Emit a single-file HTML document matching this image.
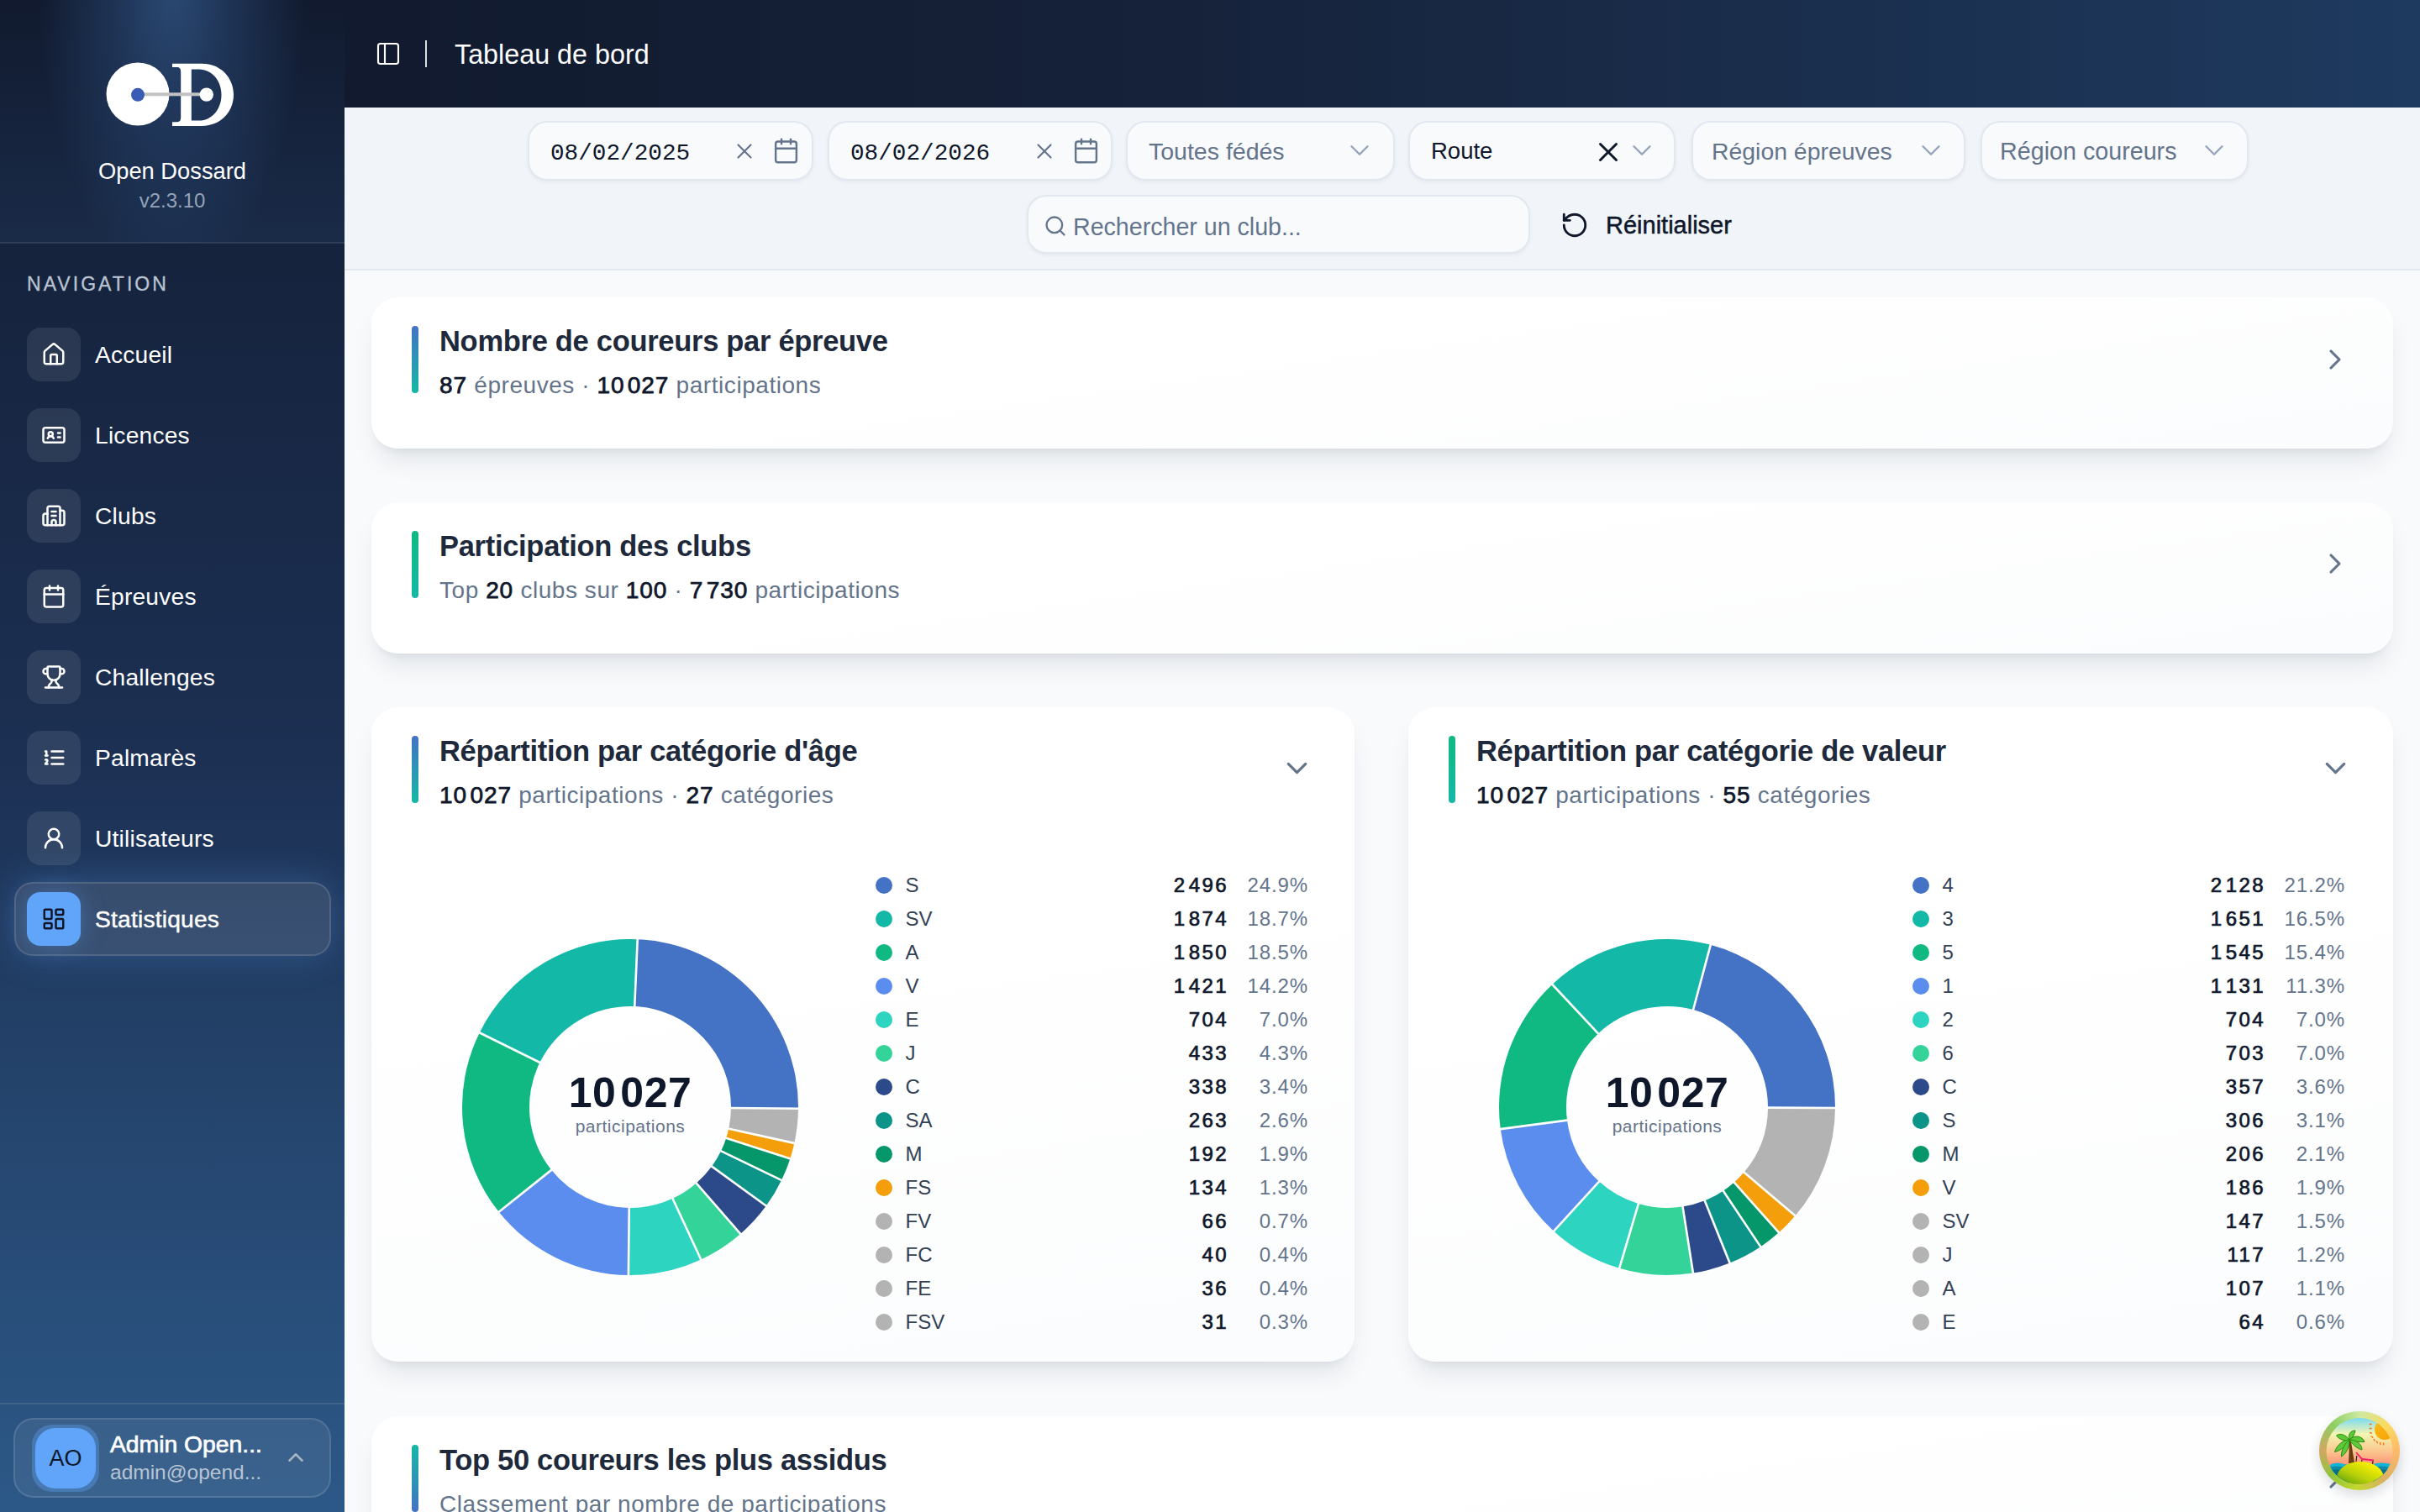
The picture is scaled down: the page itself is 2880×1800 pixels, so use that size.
<!DOCTYPE html>
<html><head><meta charset="utf-8">
<style>
*{box-sizing:border-box;margin:0;padding:0}
html,body{width:2880px;height:1800px;overflow:hidden;background:#f8fafc;font-family:"Liberation Sans",sans-serif}
.abs{position:absolute}
svg{display:block}
/* sidebar */
#sb{position:absolute;left:0;top:0;width:410px;height:1800px;
 background:linear-gradient(180deg,#121c32 0%,#16243f 20%,#1c3053 50%,#25466f 75%,#2c5887 100%);overflow:hidden}
#sbtop{position:absolute;left:0;top:0;width:410px;height:289px;
 background:radial-gradient(ellipse 160px 360px at 205px -20px,rgba(52,90,140,0.75) 0%,rgba(42,74,120,0.5) 45%,rgba(30,50,85,0) 100%),linear-gradient(180deg,#111a2e 0%,#16243e 60%,#1a2b48 100%)}
#sbdiv{position:absolute;left:0;top:288px;width:410px;height:2px;background:rgba(148,163,184,0.18)}
.brand{position:absolute;left:0;width:410px;text-align:center;color:#fff}
.navlbl{position:absolute;left:32px;top:325px;font-size:23px;letter-spacing:3.05px;color:#b9c3d2;-webkit-text-stroke:0.35px #b9c3d2}
.ni{position:absolute;left:32px;width:360px;height:64px}
.ni .ib{position:absolute;left:0;top:0;width:64px;height:64px;border-radius:16px;background:rgba(255,255,255,0.09)}
.ni .ib svg{position:absolute;left:17px;top:17px}
.ni .t{position:absolute;left:81px;top:0px;line-height:64px;font-size:28.2px;color:#fff;white-space:nowrap;letter-spacing:0.2px}
#active{position:absolute;left:17px;top:1050px;width:377px;height:88px;border-radius:22px;background:rgba(255,255,255,0.11);border:2px solid rgba(255,255,255,0.13);box-shadow:0 0 40px rgba(96,165,250,0.28)}
/* header */
#hd{position:absolute;left:410px;top:0;width:2470px;height:128px;background:linear-gradient(90deg,#111a2e 0%,#16223a 40%,#1e3a5f 100%)}
#fb{position:absolute;left:410px;top:128px;width:2470px;height:194px;background:#f1f5f9;border-bottom:2px solid #e2e8f0}
.inp{position:absolute;top:144px;height:71px;border-radius:23px;background:#f8fafc;border:2px solid #e2e8f0;box-shadow:0 2px 4px rgba(15,23,42,0.05)}
.inp .tx{position:absolute;top:0;line-height:66px;font-size:28px;color:#64748b;white-space:nowrap}
/* cards */
.card{position:absolute;background:linear-gradient(172deg,#ffffff 35%,#fbfcfd 100%);border-radius:32px;box-shadow:0 20px 30px -6px rgba(15,23,42,0.09),0 8px 12px -8px rgba(15,23,42,0.1)}
.bar{position:absolute;left:48px;width:8px;border-radius:4px}
.ttl{position:absolute;left:81px;font-size:34.5px;font-weight:700;color:#1e293b;white-space:nowrap;letter-spacing:-0.3px}
.sub{position:absolute;left:81px;font-size:28px;color:#64748b;white-space:nowrap;letter-spacing:0.55px}
.sub b{color:#0f172a;font-weight:400;letter-spacing:0.9px;-webkit-text-stroke:0.75px #0f172a}
.leg{position:absolute;height:40px;width:514px}
.leg .d{position:absolute;left:0;top:10px;width:20px;height:20px;border-radius:50%}
.leg .l{position:absolute;left:35.5px;top:0;line-height:40px;font-size:24px;color:#334155}
.leg .n{position:absolute;right:94px;top:0;line-height:40px;font-size:24px;font-weight:400;color:#0f172a;letter-spacing:2.4px;-webkit-text-stroke:0.7px #0f172a}
.leg .sp{display:inline-block;width:2.2px}
.leg .p{position:absolute;right:-1px;top:0;line-height:40px;font-size:24px;color:#64748b;letter-spacing:0.9px}
@media (max-width: 2000px){html{zoom:0.5}}
</style></head>
<body>
<div id="sb">
 <div id="sbtop"></div>
 <div id="sbdiv"></div>
 <svg class="abs" style="left:0;top:0" width="410" height="170" viewBox="0 0 410 170">
  <circle cx="164" cy="112" r="37.5" fill="#fff"/>
  <path fill="#fff" fill-rule="evenodd" d="M205,75.7 L240,75.7 C263,75.7 278,93 278,112.8 C278,133 263,149.9 240,149.9 L205,149.9 L205,145.2 L211,145.2 Q215.2,145.2 215.2,140 L215.2,85.5 Q215.2,80 211,80 L205,80 Z M227.8,82.4 L237,82.4 C252,82.4 263.5,96 263.5,113 C263.5,130 252,143.6 237,143.6 L227.8,143.6 Z"/>
  <rect x="170" y="110.3" width="70" height="4" fill="#c2c2c2"/>
  <circle cx="164" cy="112.8" r="8" fill="#3a5bb5"/>
  <circle cx="245.8" cy="112.6" r="8.2" fill="#fff"/>
 </svg>
 <div class="brand" style="top:188px;font-size:27.3px;line-height:32px">Open Dossard</div>
 <div class="brand" style="top:225px;font-size:24px;line-height:28px;color:#94a3b8">v2.3.10</div>
 <div class="navlbl">NAVIGATION</div>
<div class="ni" style="top:390px"><div class="ib"><svg width="30" height="30" viewBox="0 0 24 24" fill="none" stroke="#fff" stroke-width="2" stroke-linecap="round" stroke-linejoin="round"><path d="M15 21v-8a1 1 0 0 0-1-1h-4a1 1 0 0 0-1 1v8"/><path d="M3 10a2 2 0 0 1 .709-1.528l7-5.999a2 2 0 0 1 2.582 0l7 5.999A2 2 0 0 1 21 10v9a2 2 0 0 1-2 2H5a2 2 0 0 1-2-2z"/></svg></div><div class="t">Accueil</div></div>
<div class="ni" style="top:486px"><div class="ib"><svg width="30" height="30" viewBox="0 0 24 24" fill="none" stroke="#fff" stroke-width="2" stroke-linecap="round" stroke-linejoin="round"><path d="M16 10h2"/><path d="M16 14h2"/><path d="M6.17 15a3 3 0 0 1 5.66 0"/><circle cx="9" cy="11" r="2"/><rect x="2" y="5" width="20" height="14" rx="2"/></svg></div><div class="t">Licences</div></div>
<div class="ni" style="top:582px"><div class="ib"><svg width="30" height="30" viewBox="0 0 24 24" fill="none" stroke="#fff" stroke-width="2" stroke-linecap="round" stroke-linejoin="round"><path d="M10 12h4"/><path d="M10 8h4"/><path d="M14 21v-3a2 2 0 0 0-4 0v3"/><path d="M6 10H4a2 2 0 0 0-2 2v7a2 2 0 0 0 2 2h16a2 2 0 0 0 2-2V9a2 2 0 0 0-2-2h-2"/><path d="M6 21V5a2 2 0 0 1 2-2h8a2 2 0 0 1 2 2v16"/></svg></div><div class="t">Clubs</div></div>
<div class="ni" style="top:678px"><div class="ib"><svg width="30" height="30" viewBox="0 0 24 24" fill="none" stroke="#fff" stroke-width="2" stroke-linecap="round" stroke-linejoin="round"><path d="M8 2v4"/><path d="M16 2v4"/><rect width="18" height="18" x="3" y="4" rx="2"/><path d="M3 10h18"/></svg></div><div class="t">Épreuves</div></div>
<div class="ni" style="top:774px"><div class="ib"><svg width="30" height="30" viewBox="0 0 24 24" fill="none" stroke="#fff" stroke-width="2" stroke-linecap="round" stroke-linejoin="round"><path d="M10 14.66v1.626a2 2 0 0 1-.976 1.696A5 5 0 0 0 7 21.978"/><path d="M14 14.66v1.626a2 2 0 0 0 .976 1.696A5 5 0 0 1 17 21.978"/><path d="M18 9h1.5a1 1 0 0 0 0-5H18"/><path d="M4 22h16"/><path d="M6 9a6 6 0 0 0 12 0V3a1 1 0 0 0-1-1H7a1 1 0 0 0-1 1z"/><path d="M6 9H4.5a1 1 0 0 1 0-5H6"/></svg></div><div class="t">Challenges</div></div>
<div class="ni" style="top:870px"><div class="ib"><svg width="30" height="30" viewBox="0 0 24 24" fill="none" stroke="#fff" stroke-width="2" stroke-linecap="round" stroke-linejoin="round"><path d="M10 12h11"/><path d="M10 18h11"/><path d="M10 6h11"/><path d="M4 10h2"/><path d="M4 6h1v4"/><path d="M6 18H4c0-1 2-2 2-3s-1-1.5-2-1"/></svg></div><div class="t">Palmarès</div></div>
<div class="ni" style="top:966px"><div class="ib"><svg width="30" height="30" viewBox="0 0 24 24" fill="none" stroke="#fff" stroke-width="2" stroke-linecap="round" stroke-linejoin="round"><circle cx="12" cy="8" r="5"/><path d="M20 21a8 8 0 0 0-16 0"/></svg></div><div class="t">Utilisateurs</div></div>
<div id="active"></div>
<div class="ni" style="top:1062px"><div class="ib" style="background:#60a5fa;box-shadow:0 0 28px rgba(96,165,250,0.35)"><svg width="30" height="30" viewBox="0 0 24 24" fill="none" stroke="#0f172a" stroke-width="2" stroke-linecap="round" stroke-linejoin="round"><rect width="7" height="9" x="3" y="3" rx="1"/><rect width="7" height="5" x="14" y="3" rx="1"/><rect width="7" height="9" x="14" y="12" rx="1"/><rect width="7" height="5" x="3" y="16" rx="1"/></svg></div><div class="t" style="-webkit-text-stroke:0.45px #fff">Statistiques</div></div>
<div class="abs" style="left:0;top:1670px;width:410px;height:2px;background:rgba(148,163,184,0.2)"></div>
<div class="abs" style="left:16px;top:1688px;width:378px;height:95px;border-radius:24px;background:rgba(255,255,255,0.07);border:2px solid rgba(255,255,255,0.12)"></div>
<div class="abs" style="left:38px;top:1696px;width:80px;height:80px;border-radius:24px;background:rgba(96,165,250,0.35)"></div>
<div class="abs" style="left:42px;top:1700px;width:72px;height:72px;border-radius:24px;background:#60a5fa;color:#0f172a;font-size:27px;line-height:72px;text-align:center">AO</div>
<div class="abs" style="left:131px;top:1703px;font-size:28.3px;line-height:32px;font-weight:400;color:#fff;white-space:nowrap;-webkit-text-stroke:0.7px #fff">Admin Open...</div>
<div class="abs" style="left:131px;top:1738px;font-size:24.5px;line-height:30px;color:#b8c4d3;white-space:nowrap">admin@opend...</div>
<svg class="abs" style="left:337px;top:1720px" width="30" height="30" viewBox="0 0 24 24" fill="none" stroke="#a9b4c4" stroke-width="2" stroke-linecap="round" stroke-linejoin="round"><path d="m18 15-6-6-6 6"/></svg>
</div>
<div id="hd">
 <svg class="abs" style="left:446px;top:48px;left:36px" width="32" height="32" viewBox="0 0 24 24" fill="none" stroke="#fff" stroke-width="1.6" stroke-linecap="round" stroke-linejoin="round"><rect width="18" height="18" x="3" y="3" rx="2"/><path d="M9 3v18"/></svg>
 <div class="abs" style="left:96px;top:48px;width:2px;height:32px;background:rgba(255,255,255,0.85)"></div>
 <div class="abs" style="left:131px;top:45px;font-size:32.3px;line-height:40px;color:#fff;white-space:nowrap">Tableau de bord</div>
</div>
<div id="fb"></div>
<div class="inp" style="left:628px;width:340px"><div class="abs" style="left:1px;top:1px;width:0;height:0"><div class="tx" style="left:24px;font-family:'Liberation Mono',monospace;color:#0f172a;font-size:27.7px;top:2.5px">08/02/2025</div><div class="abs" style="left:240px;top:17.7px"><svg width="30" height="30" viewBox="0 0 24 24" fill="none" stroke="#64748b" stroke-width="1.7" stroke-linecap="round"><path d="M18 6 6 18"/><path d="m6 6 12 12"/></svg></div><div class="abs" style="left:288.4px;top:16.2px"><svg width="33" height="33" viewBox="0 0 24 24" fill="none" stroke="#64748b" stroke-width="1.75" stroke-linecap="round" stroke-linejoin="round"><path d="M8 2v4"/><path d="M16 2v4"/><rect width="18" height="18" x="3" y="4" rx="2"/><path d="M3 10h18"/></svg></div></div></div>
<div class="inp" style="left:985px;width:339px"><div class="abs" style="left:1px;top:1px;width:0;height:0"><div class="tx" style="left:24px;font-family:'Liberation Mono',monospace;color:#0f172a;font-size:27.7px;top:2.5px">08/02/2026</div><div class="abs" style="left:240px;top:17.7px"><svg width="30" height="30" viewBox="0 0 24 24" fill="none" stroke="#64748b" stroke-width="1.7" stroke-linecap="round"><path d="M18 6 6 18"/><path d="m6 6 12 12"/></svg></div><div class="abs" style="left:288.4px;top:16.2px"><svg width="33" height="33" viewBox="0 0 24 24" fill="none" stroke="#64748b" stroke-width="1.75" stroke-linecap="round" stroke-linejoin="round"><path d="M8 2v4"/><path d="M16 2v4"/><rect width="18" height="18" x="3" y="4" rx="2"/><path d="M3 10h18"/></svg></div></div></div>
<div class="inp" style="left:1340px;width:320px"><div class="abs" style="left:1px;top:1px;width:0;height:0"><div class="tx" style="left:24px;font-size:28.5px">Toutes fédés</div><div class="abs" style="left:256px;top:13px"><svg width="38" height="38" viewBox="0 0 24 24" fill="none" stroke="#94a3b8" stroke-width="1.5" stroke-linecap="round" stroke-linejoin="round"><path d="m6 9 6 6 6-6"/></svg></div></div></div>
<div class="inp" style="left:1676px;width:318px"><div class="abs" style="left:2px;top:1px;width:0;height:0"><div class="tx" style="left:23px;color:#0f172a;font-size:27.5px">Route</div><div class="abs" style="left:215px;top:14.5px"><svg width="38" height="38" viewBox="0 0 24 24" fill="none" stroke="#0f172a" stroke-width="1.9" stroke-linecap="round"><path d="M18 6 6 18"/><path d="m6 6 12 12"/></svg></div><div class="abs" style="left:255px;top:13px"><svg width="38" height="38" viewBox="0 0 24 24" fill="none" stroke="#94a3b8" stroke-width="1.5" stroke-linecap="round" stroke-linejoin="round"><path d="m6 9 6 6 6-6"/></svg></div></div></div>
<div class="inp" style="left:2013px;width:326px"><div class="abs" style="left:1px;top:1px;width:0;height:0"><div class="tx" style="left:21px;font-size:28.4px">Région épreuves</div><div class="abs" style="left:263px;top:13px"><svg width="38" height="38" viewBox="0 0 24 24" fill="none" stroke="#94a3b8" stroke-width="1.5" stroke-linecap="round" stroke-linejoin="round"><path d="m6 9 6 6 6-6"/></svg></div></div></div>
<div class="inp" style="left:2357px;width:319px"><div class="abs" style="left:1px;top:1px;width:0;height:0"><div class="tx" style="left:20px;font-size:28.7px">Région coureurs</div><div class="abs" style="left:256px;top:13px"><svg width="38" height="38" viewBox="0 0 24 24" fill="none" stroke="#94a3b8" stroke-width="1.5" stroke-linecap="round" stroke-linejoin="round"><path d="m6 9 6 6 6-6"/></svg></div></div></div>
<div class="inp" style="top:232px;left:1222px;width:599px;height:70px"><div class="abs" style="left:1px;top:1px;width:0;height:0"><svg class="abs" style="left:17px;top:20px" width="28" height="28" viewBox="0 0 24 24" fill="none" stroke="#64748b" stroke-width="2" stroke-linecap="round" stroke-linejoin="round"><circle cx="11" cy="11" r="8"/><path d="m21 21-4.3-4.3"/></svg><div class="tx" style="left:52px;top:1.5px;font-size:28.6px">Rechercher un club...</div></div></div>
<svg class="abs" style="left:1857px;top:251px" width="34" height="34" viewBox="0 0 24 24" fill="none" stroke="#0f172a" stroke-width="2" stroke-linecap="round" stroke-linejoin="round"><path d="M3 12a9 9 0 1 0 9-9 9.75 9.75 0 0 0-6.74 2.74L3 8"/><path d="M3 3v5h5"/></svg>
<div class="abs" style="left:1911px;top:250px;font-size:29px;line-height:36px;color:#0f172a;white-space:nowrap;font-weight:400;-webkit-text-stroke:0.5px #0f172a">Réinitialiser</div>
<!--CARDS-->
<div class="card" style="left:442px;top:354px;width:2406px;height:180px"><div class="bar" style="top:34px;height:80px;background:linear-gradient(180deg,#4472c4,#14b8a6)"></div><div class="ttl" style="top:32px;line-height:40px">Nombre de coureurs par épreuve</div><div class="sub" style="top:87.5px;line-height:34px"><b>87</b> épreuves · <b>10<i style="display:inline-block;width:3.5px"></i>027</b> participations</div><div class="abs" style="left:2317.4px;top:53.8px"><svg width="40" height="40" viewBox="0 0 24 24" fill="none" stroke="#64748b" stroke-width="1.9" stroke-linecap="round" stroke-linejoin="round"><path d="m9 18 6-6-6-6"/></svg></div></div>
<div class="card" style="left:442px;top:598px;width:2406px;height:180px"><div class="bar" style="top:34px;height:80px;background:linear-gradient(180deg,#10b981,#14b8a6)"></div><div class="ttl" style="top:32px;line-height:40px">Participation des clubs</div><div class="sub" style="top:87.5px;line-height:34px">Top <b>20</b> clubs sur <b>100</b> · <b>7<i style="display:inline-block;width:3.5px"></i>730</b> participations</div><div class="abs" style="left:2317.4px;top:53.4px"><svg width="40" height="40" viewBox="0 0 24 24" fill="none" stroke="#64748b" stroke-width="1.9" stroke-linecap="round" stroke-linejoin="round"><path d="m9 18 6-6-6-6"/></svg></div></div>
<div class="card" style="left:442px;top:842px;width:1170px;height:779px"><div class="bar" style="top:34px;height:80px;background:linear-gradient(180deg,#4472c4,#14b8a6)"></div><div class="ttl" style="top:32px;line-height:40px">Répartition par catégorie d&#39;âge</div><div class="sub" style="top:87.5px;line-height:34px"><b>10<i style="display:inline-block;width:3.5px"></i>027</b> participations · <b>27</b> catégories</div><div class="abs" style="left:1081.2px;top:52.1px"><svg width="41" height="41" viewBox="0 0 24 24" fill="none" stroke="#64748b" stroke-width="1.9" stroke-linecap="round" stroke-linejoin="round"><path d="m6 9 6 6 6-6"/></svg></div><svg class="abs" style="left:0;top:0" width="620" height="779"><path d="M507.99,477.75 A200,200 0 0 1 503.33,518.95 L425.20,501.77 A120,120 0 0 0 428.00,477.05 Z" fill="#b3b3b3"/><path d="M503.33,518.95 A200,200 0 0 1 498.32,537.47 L422.19,512.88 A120,120 0 0 0 425.20,501.77 Z" fill="#f59e0b"/><path d="M498.32,537.47 A200,200 0 0 1 488.06,563.05 L416.04,528.23 A120,120 0 0 0 422.19,512.88 Z" fill="#059669"/><path d="M488.06,563.05 A200,200 0 0 1 469.80,593.56 L405.08,546.53 A120,120 0 0 0 416.04,528.23 Z" fill="#0d9488"/><path d="M469.80,593.56 A200,200 0 0 1 439.21,626.94 L386.73,566.57 A120,120 0 0 0 405.08,546.53 Z" fill="#2c4a8a"/><path d="M439.21,626.94 A200,200 0 0 1 392.21,657.41 L358.52,584.85 A120,120 0 0 0 386.73,566.57 Z" fill="#34d399"/><path d="M392.21,657.41 A200,200 0 0 1 305.91,675.99 L306.74,595.99 A120,120 0 0 0 358.52,584.85 Z" fill="#2dd4bf"/><path d="M305.91,675.99 A200,200 0 0 1 151.70,600.78 L214.22,550.87 A120,120 0 0 0 306.74,595.99 Z" fill="#5b8def"/><path d="M151.70,600.78 A200,200 0 0 1 128.70,387.39 L200.42,422.83 A120,120 0 0 0 214.22,550.87 Z" fill="#10b981"/><path d="M128.70,387.39 A200,200 0 0 1 316.72,276.19 L313.23,356.11 A120,120 0 0 0 200.42,422.83 Z" fill="#14b8a6"/><path d="M316.72,276.19 A200,200 0 0 1 507.99,477.75 L428.00,477.05 A120,120 0 0 0 313.23,356.11 Z" fill="#4472c4"/><line x1="426.00" y1="477.03" x2="509.99" y2="477.76" stroke="#fff" stroke-width="2.6"/><line x1="423.25" y1="501.34" x2="505.29" y2="519.38" stroke="#fff" stroke-width="2.6"/><line x1="420.29" y1="512.27" x2="500.22" y2="538.09" stroke="#fff" stroke-width="2.6"/><line x1="414.24" y1="527.36" x2="489.86" y2="563.92" stroke="#fff" stroke-width="2.6"/><line x1="403.46" y1="545.36" x2="471.42" y2="594.73" stroke="#fff" stroke-width="2.6"/><line x1="385.41" y1="565.06" x2="440.52" y2="628.45" stroke="#fff" stroke-width="2.6"/><line x1="357.68" y1="583.03" x2="393.05" y2="659.22" stroke="#fff" stroke-width="2.6"/><line x1="306.76" y1="593.99" x2="305.88" y2="677.99" stroke="#fff" stroke-width="2.6"/><line x1="215.78" y1="549.62" x2="150.13" y2="602.02" stroke="#fff" stroke-width="2.6"/><line x1="202.21" y1="423.72" x2="126.91" y2="386.50" stroke="#fff" stroke-width="2.6"/><line x1="313.15" y1="358.11" x2="316.81" y2="274.19" stroke="#fff" stroke-width="2.6"/></svg><div class="abs" style="left:158px;top:433px;width:300px;text-align:center;font-size:50px;line-height:52px;font-weight:700;color:#0f172a;letter-spacing:0.5px">10<i style="display:inline-block;width:5px"></i>027</div><div class="abs" style="left:158px;top:485.5px;width:300px;text-align:center;font-size:21px;line-height:26px;color:#64748b;letter-spacing:0.5px">participations</div>
<div class="leg" style="left:600px;top:192px"><div class="d" style="background:#4472c4"></div><div class="l">S</div><div class="n">2<i class="sp"></i>496</div><div class="p">24.9%</div></div>
<div class="leg" style="left:600px;top:232px"><div class="d" style="background:#14b8a6"></div><div class="l">SV</div><div class="n">1<i class="sp"></i>874</div><div class="p">18.7%</div></div>
<div class="leg" style="left:600px;top:272px"><div class="d" style="background:#10b981"></div><div class="l">A</div><div class="n">1<i class="sp"></i>850</div><div class="p">18.5%</div></div>
<div class="leg" style="left:600px;top:312px"><div class="d" style="background:#5b8def"></div><div class="l">V</div><div class="n">1<i class="sp"></i>421</div><div class="p">14.2%</div></div>
<div class="leg" style="left:600px;top:352px"><div class="d" style="background:#2dd4bf"></div><div class="l">E</div><div class="n">704</div><div class="p">7.0%</div></div>
<div class="leg" style="left:600px;top:392px"><div class="d" style="background:#34d399"></div><div class="l">J</div><div class="n">433</div><div class="p">4.3%</div></div>
<div class="leg" style="left:600px;top:432px"><div class="d" style="background:#2c4a8a"></div><div class="l">C</div><div class="n">338</div><div class="p">3.4%</div></div>
<div class="leg" style="left:600px;top:472px"><div class="d" style="background:#0d9488"></div><div class="l">SA</div><div class="n">263</div><div class="p">2.6%</div></div>
<div class="leg" style="left:600px;top:512px"><div class="d" style="background:#059669"></div><div class="l">M</div><div class="n">192</div><div class="p">1.9%</div></div>
<div class="leg" style="left:600px;top:552px"><div class="d" style="background:#f59e0b"></div><div class="l">FS</div><div class="n">134</div><div class="p">1.3%</div></div>
<div class="leg" style="left:600px;top:592px"><div class="d" style="background:#b3b3b3"></div><div class="l">FV</div><div class="n">66</div><div class="p">0.7%</div></div>
<div class="leg" style="left:600px;top:632px"><div class="d" style="background:#b3b3b3"></div><div class="l">FC</div><div class="n">40</div><div class="p">0.4%</div></div>
<div class="leg" style="left:600px;top:672px"><div class="d" style="background:#b3b3b3"></div><div class="l">FE</div><div class="n">36</div><div class="p">0.4%</div></div>
<div class="leg" style="left:600px;top:712px"><div class="d" style="background:#b3b3b3"></div><div class="l">FSV</div><div class="n">31</div><div class="p">0.3%</div></div>
</div>
<div class="card" style="left:1676px;top:842px;width:1172px;height:779px"><div class="bar" style="top:34px;height:80px;background:linear-gradient(180deg,#10b981,#14b8a6)"></div><div class="ttl" style="top:32px;line-height:40px">Répartition par catégorie de valeur</div><div class="sub" style="top:87.5px;line-height:34px"><b>10<i style="display:inline-block;width:3.5px"></i>027</b> participations · <b>55</b> catégories</div><div class="abs" style="left:1082.5px;top:52.1px"><svg width="41" height="41" viewBox="0 0 24 24" fill="none" stroke="#64748b" stroke-width="1.9" stroke-linecap="round" stroke-linejoin="round"><path d="m6 9 6 6 6-6"/></svg></div><svg class="abs" style="left:0;top:0" width="620" height="779"><path d="M508.00,477.05 A200,200 0 0 1 460.53,605.36 L399.52,553.61 A120,120 0 0 0 428.00,476.63 Z" fill="#b3b3b3"/><path d="M460.53,605.36 A200,200 0 0 1 441.05,625.33 L387.83,565.60 A120,120 0 0 0 399.52,553.61 Z" fill="#f59e0b"/><path d="M441.05,625.33 A200,200 0 0 1 419.26,642.20 L374.76,575.72 A120,120 0 0 0 387.83,565.60 Z" fill="#059669"/><path d="M419.26,642.20 A200,200 0 0 1 382.60,661.57 L352.76,587.34 A120,120 0 0 0 374.76,575.72 Z" fill="#0d9488"/><path d="M382.60,661.57 A200,200 0 0 1 338.94,673.59 L326.57,594.56 A120,120 0 0 0 352.76,587.34 Z" fill="#2c4a8a"/><path d="M338.94,673.59 A200,200 0 0 1 251.20,667.76 L273.92,591.06 A120,120 0 0 0 326.57,594.56 Z" fill="#34d399"/><path d="M251.20,667.76 A200,200 0 0 1 173.14,623.69 L227.08,564.61 A120,120 0 0 0 273.92,591.06 Z" fill="#2dd4bf"/><path d="M173.14,623.69 A200,200 0 0 1 109.71,502.11 L189.03,491.66 A120,120 0 0 0 227.08,564.61 Z" fill="#5b8def"/><path d="M109.71,502.11 A200,200 0 0 1 171.35,329.97 L226.01,388.38 A120,120 0 0 0 189.03,491.66 Z" fill="#10b981"/><path d="M171.35,329.97 A200,200 0 0 1 359.76,282.81 L339.06,360.09 A120,120 0 0 0 226.01,388.38 Z" fill="#14b8a6"/><path d="M359.76,282.81 A200,200 0 0 1 508.00,477.05 L428.00,476.63 A120,120 0 0 0 339.06,360.09 Z" fill="#4472c4"/><line x1="426.00" y1="476.62" x2="510.00" y2="477.06" stroke="#fff" stroke-width="2.6"/><line x1="397.99" y1="552.32" x2="462.06" y2="606.65" stroke="#fff" stroke-width="2.6"/><line x1="386.50" y1="564.10" x2="442.38" y2="626.82" stroke="#fff" stroke-width="2.6"/><line x1="373.64" y1="574.06" x2="420.37" y2="643.86" stroke="#fff" stroke-width="2.6"/><line x1="352.01" y1="585.48" x2="383.34" y2="663.42" stroke="#fff" stroke-width="2.6"/><line x1="326.26" y1="592.58" x2="339.25" y2="675.57" stroke="#fff" stroke-width="2.6"/><line x1="274.49" y1="589.14" x2="250.63" y2="669.68" stroke="#fff" stroke-width="2.6"/><line x1="228.43" y1="563.14" x2="171.79" y2="625.17" stroke="#fff" stroke-width="2.6"/><line x1="191.01" y1="491.40" x2="107.73" y2="502.37" stroke="#fff" stroke-width="2.6"/><line x1="227.37" y1="389.84" x2="169.98" y2="328.51" stroke="#fff" stroke-width="2.6"/><line x1="338.54" y1="362.02" x2="360.28" y2="280.88" stroke="#fff" stroke-width="2.6"/></svg><div class="abs" style="left:158px;top:433px;width:300px;text-align:center;font-size:50px;line-height:52px;font-weight:700;color:#0f172a;letter-spacing:0.5px">10<i style="display:inline-block;width:5px"></i>027</div><div class="abs" style="left:158px;top:485.5px;width:300px;text-align:center;font-size:21px;line-height:26px;color:#64748b;letter-spacing:0.5px">participations</div>
<div class="leg" style="left:600px;top:192px"><div class="d" style="background:#4472c4"></div><div class="l">4</div><div class="n">2<i class="sp"></i>128</div><div class="p">21.2%</div></div>
<div class="leg" style="left:600px;top:232px"><div class="d" style="background:#14b8a6"></div><div class="l">3</div><div class="n">1<i class="sp"></i>651</div><div class="p">16.5%</div></div>
<div class="leg" style="left:600px;top:272px"><div class="d" style="background:#10b981"></div><div class="l">5</div><div class="n">1<i class="sp"></i>545</div><div class="p">15.4%</div></div>
<div class="leg" style="left:600px;top:312px"><div class="d" style="background:#5b8def"></div><div class="l">1</div><div class="n">1<i class="sp"></i>131</div><div class="p">11.3%</div></div>
<div class="leg" style="left:600px;top:352px"><div class="d" style="background:#2dd4bf"></div><div class="l">2</div><div class="n">704</div><div class="p">7.0%</div></div>
<div class="leg" style="left:600px;top:392px"><div class="d" style="background:#34d399"></div><div class="l">6</div><div class="n">703</div><div class="p">7.0%</div></div>
<div class="leg" style="left:600px;top:432px"><div class="d" style="background:#2c4a8a"></div><div class="l">C</div><div class="n">357</div><div class="p">3.6%</div></div>
<div class="leg" style="left:600px;top:472px"><div class="d" style="background:#0d9488"></div><div class="l">S</div><div class="n">306</div><div class="p">3.1%</div></div>
<div class="leg" style="left:600px;top:512px"><div class="d" style="background:#059669"></div><div class="l">M</div><div class="n">206</div><div class="p">2.1%</div></div>
<div class="leg" style="left:600px;top:552px"><div class="d" style="background:#f59e0b"></div><div class="l">V</div><div class="n">186</div><div class="p">1.9%</div></div>
<div class="leg" style="left:600px;top:592px"><div class="d" style="background:#b3b3b3"></div><div class="l">SV</div><div class="n">147</div><div class="p">1.5%</div></div>
<div class="leg" style="left:600px;top:632px"><div class="d" style="background:#b3b3b3"></div><div class="l">J</div><div class="n">117</div><div class="p">1.2%</div></div>
<div class="leg" style="left:600px;top:672px"><div class="d" style="background:#b3b3b3"></div><div class="l">A</div><div class="n">107</div><div class="p">1.1%</div></div>
<div class="leg" style="left:600px;top:712px"><div class="d" style="background:#b3b3b3"></div><div class="l">E</div><div class="n">64</div><div class="p">0.6%</div></div>
</div>
<div class="card" style="left:442px;top:1686px;width:2406px;height:300px"><div class="bar" style="top:34px;height:80px;background:linear-gradient(180deg,#14b8a6,#4472c4)"></div><div class="ttl" style="top:32px;line-height:40px">Top 50 coureurs les plus assidus</div><div class="sub" style="top:87.5px;line-height:34px">Classement par nombre de participations</div><div class="abs" style="left:2317.4px;top:53.8px"><svg width="40" height="40" viewBox="0 0 24 24" fill="none" stroke="#64748b" stroke-width="1.9" stroke-linecap="round" stroke-linejoin="round"><path d="m9 18 6-6-6-6"/></svg></div></div>
<!--/CARDS-->
<!--BEACH--><div class="abs" style="left:2760px;top:1680px;width:96px;height:94px;border-radius:50%;background:conic-gradient(from 0deg,#cdeaa0 0deg,#fdd85e 50deg,#fbb76a 95deg,#d9b262 140deg,#c2d82c 185deg,#8fc43c 230deg,#d0a862 270deg,#8ccf62 315deg,#cdeaa0 360deg);box-shadow:0 6px 14px rgba(15,23,42,0.14)"></div>
<svg class="abs" style="left:2756px;top:1676px" width="104" height="104" viewBox="0 0 104 104">
<defs>
<linearGradient id="sky" x1="0" y1="0" x2="0" y2="1"><stop offset="0.1" stop-color="#6fd7f6"/><stop offset="0.3" stop-color="#f3f6b2"/><stop offset="0.5" stop-color="#fbc68e"/><stop offset="0.68" stop-color="#fd8a72"/></linearGradient>
<linearGradient id="hill" x1="0.85" y1="0.1" x2="0.3" y2="0.95"><stop offset="0" stop-color="#fff200"/><stop offset="0.5" stop-color="#b5cf0a"/><stop offset="1" stop-color="#3f8f0a"/></linearGradient>
<linearGradient id="sun" x1="0" y1="0" x2="1" y2="1"><stop offset="0" stop-color="#fdbb1c"/><stop offset="1" stop-color="#f7a000"/></linearGradient>
<clipPath id="cc"><circle cx="52" cy="51.6" r="39.5"/></clipPath>
</defs>
<g clip-path="url(#cc)">
<rect x="0" y="0" width="104" height="104" fill="url(#sky)"/>
<circle cx="82" cy="26" r="12" fill="url(#sun)"/>
<g stroke="#f97316" stroke-width="1.4" stroke-linecap="round">
<path d="M64 19.5h2"/><path d="M64 24.5h2.2"/><path d="M64.5 29.5l2 .8"/><path d="M66 34l1.8 1.2"/><path d="M69 37.5l1.3 1.6"/><path d="M72.5 40l.9 1.8"/><path d="M76.5 41.5l.4 2"/><path d="M80.5 42l.1 2"/>
</g>
<path d="M18 67 Q26 64 34 67 L40 68 V104 H0Z" fill="#13b5d6"/>
<path d="M15 71 Q25 68 35 71 L40 72 V104 H0Z" fill="#0e8aa6"/>
<path d="M15 75 Q25 72 35 75 L40 76 V104 H0Z" fill="#0a6e88"/>
<path d="M68 67 Q78 64 90 67 L104 68 V104 H66Z" fill="#13b5d6"/>
<path d="M68 71 Q78 68 90 71 L104 72 V104 H66Z" fill="#0e8aa6"/>
<path d="M68 75 Q78 72 90 75 L104 76 V104 H66Z" fill="#0a6e88"/>
<path d="M39 66 C39.5 56 40 46 39 38 L41.5 38 C43 46 44.5 56 46 66Z" fill="#6b3f12"/>
<g fill="#5cc93a" stroke="#2f8a12" stroke-width="1">
<path d="M40 38 C35 31 28 30 24.5 33 C28 38 35 40 40 38Z"/>
<path d="M40 38 C38 32 41 27 47 27 C46 32 44 36 40 38Z"/>
<path d="M40 38 C46 32 55 33 58 40.5 C52 41 46 40 40 38Z"/>
<path d="M40 38 C48 38 55 43 55 50 C48 48 43 43 40 38Z"/>
<path d="M40 38 C33 38 25 44 22.5 52.5 C30 51 36 45 40 38Z"/>
<path d="M40 38 C35 42 30 50 30.5 58 C37 54 40 46 40 38Z"/>
</g>
<g stroke="#111" stroke-width="1.1"><path d="M48.8 57 L48 64"/><path d="M55 62 L54.6 64"/><path d="M68 63 L67.6 67"/></g>
<path d="M48.5 52.5 L55.5 60 L69 61.5 L69 63.5 L54.5 62 L47.5 53.5Z" fill="#f0206a"/>
<ellipse cx="53" cy="84" rx="28" ry="20" fill="url(#hill)"/>
</g>
</svg><!--/BEACH-->
</body></html>
